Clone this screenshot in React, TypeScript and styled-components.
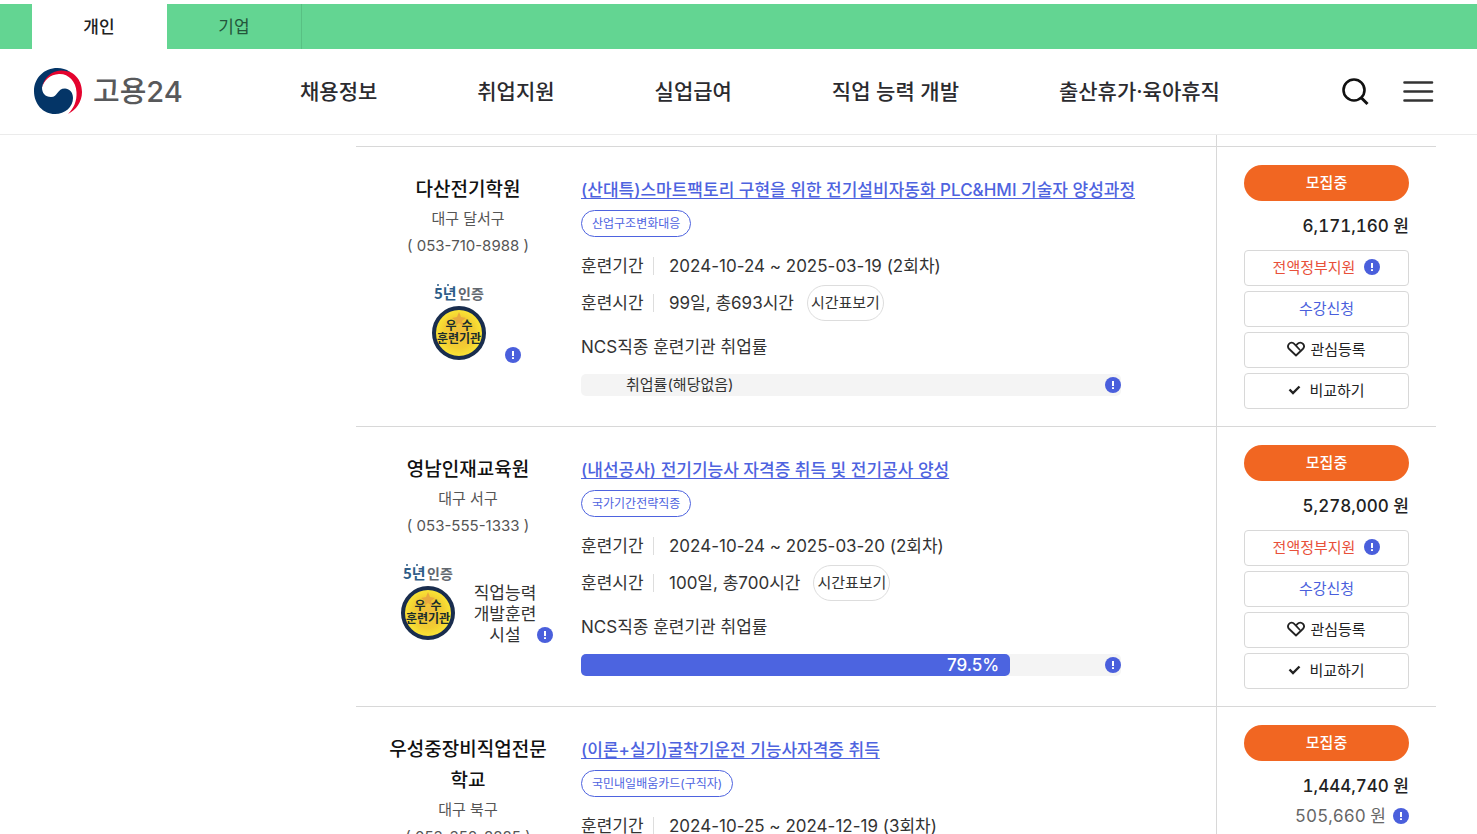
import React from 'react';
import styled, { createGlobalStyle } from 'styled-components';

const Global = createGlobalStyle`
  *, *::before, *::after { box-sizing: border-box; }
  body {
    margin: 0;
    background: #fff;
    color: #333;
    font: 400 17px/26px Inter, 'Noto Sans CJK KR', sans-serif;
  }
  h1, h2, h3, p, dl, dt, dd, ul { margin: 0; padding: 0; }
  button { font-family: inherit; cursor: pointer; }
`;

const Page = styled.div`
  display: flex;
  flex-direction: column;
  height: 100vh;
  overflow: hidden;
`;

const TabBar = styled.nav`
  display: flex;
  flex: none;
  height: 45px;
  margin-top: 4px;
  padding-left: 32px;
  background: #63d592;
`;

const Tab = styled.a<{ $active?: boolean }>`
  width: 135px;
  line-height: 46px;
  text-align: center;
  text-decoration: none;
  color: ${(p) => (p.$active ? '#222' : '#24553b')};
  background: ${(p) => (p.$active ? '#fff' : 'transparent')};
  font-weight: ${(p) => (p.$active ? 500 : 400)};
  border-right: 1px solid ${(p) => (p.$active ? '#fff' : '#58c083')};
`;

const Header = styled.header`
  display: flex;
  flex: none;
  align-items: center;
  height: 86px;
  padding: 0 43px 0 33px;
  border-bottom: 1px solid #ebebeb;
`;

const Logo = styled.a`
  display: flex;
  align-items: center;
  gap: 10px;
  width: 267px;
  color: #58595b;
  font-size: 29px;
  font-weight: 500;
  line-height: 40px;
  text-decoration: none;
`;

const Menu = styled.nav`
  display: flex;
  flex: 1;
  gap: 100px;
`;

const MenuLink = styled.a`
  color: #2b2b2f;
  font-size: 21px;
  font-weight: 500;
  line-height: 30px;
  text-decoration: none;
  white-space: nowrap;
`;

const Tools = styled.div`
  display: flex;
  gap: 30px;
`;

const IconButton = styled.button`
  display: flex;
  padding: 0;
  border: 0;
  background: none;
`;

const Main = styled.main`
  flex: 1;
  min-height: 0;
  overflow: hidden;
  padding: 0 41px 0 356px;
`;

const Course = styled.article`
  display: grid;
  grid-template-columns: 225px minmax(0, 1fr) 220px;
  min-height: 280px;
  border-top: 1px solid #d8d8d8;
`;

const ListTop = styled.div`
  height: 11px;
  margin-right: 219px;
  border-right: 1px solid #d8d8d8;
`;

const Org = styled.div`
  display: flex;
  flex-direction: column;
  align-items: center;
  padding: 27px 32px 0 31px;
  text-align: center;
`;

const OrgName = styled.h2`
  color: #111;
  font-size: 19px;
  font-weight: 500;
  line-height: 31px;
  word-break: break-all;
`;

const OrgText = styled.p`
  color: #555;
  font-size: 15px;
  line-height: 27px;
`;

const Marks = styled.div`
  display: flex;
  align-items: flex-end;
  min-height: 86px;
  margin: 21px 0 0 14px;
`;

const BadgeSlot = styled.div`
  display: flex;
  padding: 0 16px 4px 0;
`;

const MarkSlot = styled.div`
  display: flex;
  padding-bottom: 3px;
`;

const Facility = styled.p`
  width: 63px;
  line-height: 21px;
`;

const Info = styled.div`
  padding: 30px 0 0;
`;

const Title = styled.h3`
  font-size: 17px;
  font-weight: 500;
  line-height: 27px;
`;

const TitleLink = styled.a`
  color: #4e63df;
  text-underline-offset: 2px;
`;

const Tag = styled.span`
  display: block;
  width: fit-content;
  margin: 6px 0 10px;
  padding: 0 10px;
  border: 1px solid #4e63df;
  border-radius: 14px;
  color: #4e63df;
  font-size: 12px;
  line-height: 25px;
`;

const Facts = styled.dl`
  display: grid;
  grid-template-columns: 73px 1fr;
  grid-auto-rows: 37px;
  align-items: center;
`;

const Term = styled.dt`
  line-height: 18px;
  border-right: 1px solid #ddd;
`;

const Value = styled.dd`
  display: flex;
  align-items: center;
  gap: 13px;
  padding-left: 15px;
`;

const TimetableButton = styled.button`
  height: 36px;
  padding: 0 3px 2px;
  border: 1px solid #ddd;
  border-radius: 18px;
  background: #fff;
  color: #333;
  font-size: 15px;
`;

const RateLabel = styled.p`
  margin: 13px 0 14px;
`;

const RateBar = styled.div`
  position: relative;
  display: flex;
  width: 85%;
  height: 22px;
  border-radius: 5px;
  background: #f4f4f4;
  font-size: 15px;
  line-height: 22px;
`;

const RateFill = styled.div`
  padding-right: 11px;
  border-radius: 5px;
  background: #4c64e0;
  color: #fff;
  font-size: 17px;
  font-weight: 500;
  text-align: right;
`;

const RateEmpty = styled.span`
  padding-left: 45px;
`;

const RateInfo = styled.span`
  position: absolute;
  top: 3px;
  right: 0;
  display: flex;
`;

const Side = styled.div`
  display: flex;
  flex-direction: column;
  gap: 5px;
  padding: 18px 27px 12px;
  border-left: 1px solid #d8d8d8;
`;

const Status = styled.strong`
  height: 36px;
  border-radius: 18px;
  background: #f16622;
  color: #fff;
  font-size: 15px;
  font-weight: 500;
  line-height: 35px;
  text-align: center;
`;

const Prices = styled.div`
  padding: 7px 0 6px;
  text-align: right;
  font-variant-numeric: tabular-nums;
`;

const Price = styled.p`
  color: #222;
  font-weight: 500;
  line-height: 26px;
`;

const OwnPrice = styled.p`
  display: flex;
  align-items: center;
  justify-content: flex-end;
  gap: 7px;
  padding-top: 4px;
  color: #666;
`;

const SideButton = styled.button<{ $tone?: string; $gap?: number }>`
  display: flex;
  align-items: center;
  justify-content: center;
  gap: ${(p) => p.$gap ?? 5}px;
  height: 36px;
  padding: 0 0 3px;
  border: 1px solid #d8d8d8;
  border-radius: 4px;
  background: #fff;
  color: ${(p) => p.$tone ?? '#222'};
  font-size: 15px;
`;

const Mark = () => (
  <svg width="16" height="16" viewBox="0 0 16 16" role="img" aria-label="안내">
    <circle cx="8" cy="8" r="8" fill="#4a5fdc" />
    <path d="M8 4v5M8 10.200v1.800" stroke="#fff" strokeWidth="2" />
  </svg>
);

const Taegeuk = () => (
  <svg width="50" height="48" viewBox="0 1 50 48" aria-hidden="true">
    <path d="M9 21C10 9 18 3 28 3C40 3 49 12 49 25C49 35 43 43 35 47C41 41 44 34 43.500 25C43 14 35 6.500 26 7C17 7.500 11 13 9 21Z" fill="#e4032e" />
    <path d="M37 5C33 2 29 1 24.500 1C11 1 1 11 1 24C1 37 10 47 22 47C32 47 40 40 40 31C40 25 36 21.500 32 21.500C24 21.500 25 30 18 30C12 30 9 26 9 20.500C11 11 18 4 28 3.500C31 3.400 34 4 37 5Z" fill="#043567" />
  </svg>
);

const Badge = () => (
  <svg width="60" height="82" viewBox="0 0 60 82" role="img" aria-label="5년 인증 우수훈련기관">
    <defs>
      <radialGradient id="gold">
        <stop offset="0" stopColor="#f0bb3c" />
        <stop offset=".6" stopColor="#f2cd32" />
        <stop offset="1" stopColor="#fbe936" />
      </radialGradient>
    </defs>
    <g fontFamily="'Noto Sans CJK KR', sans-serif" fontWeight="700">
      <text x="5" y="19" fontSize="15" fill="#2d5c88">5년</text>
      <text x="29" y="19" fontSize="14" fill="#62686f">인증</text>
      <circle cx="9" cy="5" r="1" fill="#2d5c88" />
      <circle cx="19" cy="5" r="1" fill="#2d5c88" />
      <circle cx="30" cy="53" r="25" fill="url(#gold)" stroke="#192d4e" strokeWidth="4" />
      <path d="M30 32l2 5 5 1-4 3 1 5-4-3-4 3 1-5-4-3 5-1z" fill="#e9a93f" />
      <g fill="#1c2c2c" textAnchor="middle">
        <text x="22" y="50" fontSize="12">우</text>
        <text x="38" y="50" fontSize="12">수</text>
        <text x="30" y="63" fontSize="12">훈련기관</text>
      </g>
    </g>
  </svg>
);

const Heart = () => (
  <svg width="18" height="16" viewBox="0 0 18 16" fill="none" stroke="#222" strokeWidth="1.800" strokeLinecap="round" strokeLinejoin="round" aria-hidden="true">
    <path d="M12.500 8.500L7.500 3.200C5.800 1.200 3.300 1.300 1.900 3C.7 4.600.9 6.700 2.200 8L9 14.500L15.800 8C17.200 6.600 17.300 4.400 16 2.900C14.500 1.200 12 1.200 10.500 2.900L9.500 4" />
  </svg>
);

const Check = () => (
  <svg width="13" height="10" viewBox="0 0 13 10" fill="none" aria-hidden="true">
    <path d="M1.500 4.500L5 8L11.500 1.500" stroke="#222" strokeWidth="2.400" />
  </svg>
);

interface CourseData {
  org: string;
  area: string;
  phone: string;
  facility?: boolean;
  title: string;
  tag: string;
  period: string;
  hours: string;
  rate?: number;
  price: string;
  ownPrice?: string;
}

const courses: CourseData[] = [
  {
    org: '다산전기학원',
    area: '대구 달서구',
    phone: '053-710-8988',
    title: '(산대특)스마트팩토리 구현을 위한 전기설비자동화 PLC&HMI 기술자 양성과정',
    tag: '산업구조변화대응',
    period: '2024-10-24 ~ 2025-03-19 (2회차)',
    hours: '99일, 총693시간',
    price: '6,171,160 원',
  },
  {
    org: '영남인재교육원',
    area: '대구 서구',
    phone: '053-555-1333',
    facility: true,
    title: '(내선공사) 전기기능사 자격증 취득 및 전기공사 양성',
    tag: '국가기간전략직종',
    period: '2024-10-24 ~ 2025-03-20 (2회차)',
    hours: '100일, 총700시간',
    rate: 79.5,
    price: '5,278,000 원',
  },
  {
    org: '우성중장비직업전문학교',
    area: '대구 북구',
    phone: '053-352-8885',
    title: '(이론+실기)굴착기운전 기능사자격증 취득',
    tag: '국민내일배움카드(구직자)',
    period: '2024-10-25 ~ 2024-12-19 (3회차)',
    hours: '40일, 총160시간',
    price: '1,444,740 원',
    ownPrice: '505,660 원',
  },
];

const menu = ['채용정보', '취업지원', '실업급여', '직업 능력 개발', '출산휴가·육아휴직'];

const CourseRow = ({ c }: { c: CourseData }) => (
  <Course>
    <Org>
      <OrgName>{c.org}</OrgName>
      <OrgText>{c.area}</OrgText>
      <OrgText>( {c.phone} )</OrgText>
      <Marks>
        <BadgeSlot>
          <Badge />
        </BadgeSlot>
        {c.facility && <Facility>직업능력개발훈련시설</Facility>}
        <MarkSlot>
          <Mark />
        </MarkSlot>
      </Marks>
    </Org>
    <Info>
      <Title>
        <TitleLink href="#">{c.title}</TitleLink>
      </Title>
      <Tag>{c.tag}</Tag>
      <Facts>
        <Term>훈련기간</Term>
        <Value>{c.period}</Value>
        <Term>훈련시간</Term>
        <Value>
          {c.hours}
          <TimetableButton>시간표보기</TimetableButton>
        </Value>
      </Facts>
      <RateLabel>NCS직종 훈련기관 취업률</RateLabel>
      <RateBar>
        {c.rate ? <RateFill style={{ width: `${c.rate}%` }}>{c.rate}%</RateFill> : <RateEmpty>취업률(해당없음)</RateEmpty>}
        <RateInfo>
          <Mark />
        </RateInfo>
      </RateBar>
    </Info>
    <Side>
      <Status>모집중</Status>
      <Prices>
        <Price>{c.price}</Price>
        {c.ownPrice && (
          <OwnPrice>
            {c.ownPrice}
            <Mark />
          </OwnPrice>
        )}
      </Prices>
      {!c.ownPrice && (
        <SideButton $tone="#e8503a" $gap={9}>
          전액정부지원
          <Mark />
        </SideButton>
      )}
      <SideButton $tone="#4a5fdc">수강신청</SideButton>
      <SideButton>
        <Heart />
        관심등록
      </SideButton>
      <SideButton $gap={8}>
        <Check />
        비교하기
      </SideButton>
    </Side>
  </Course>
);

export default function App() {
  return (
    <Page>
      <Global />
      <TabBar>
        <Tab href="#" $active>
          개인
        </Tab>
        <Tab href="#">기업</Tab>
      </TabBar>
      <Header>
        <Logo href="#">
          <Taegeuk />
          고용24
        </Logo>
        <Menu>
          {menu.map((m) => (
            <MenuLink key={m} href="#">
              {m}
            </MenuLink>
          ))}
        </Menu>
        <Tools>
          <IconButton aria-label="검색">
            <svg width="32" height="32" viewBox="0 0 32 32" fill="none" stroke="#111" strokeWidth="2.600">
              <circle cx="14" cy="14" r="10.500" />
              <path d="M21 21.500L27.500 28" strokeWidth="3" />
            </svg>
          </IconButton>
          <IconButton aria-label="전체메뉴">
            <svg width="32" height="32" viewBox="0 0 32 32" stroke="#333" strokeWidth="2.600" strokeLinecap="round">
              <path d="M2.500 6.500H30M2.500 15.500H30M2.500 24.500H30" />
            </svg>
          </IconButton>
        </Tools>
      </Header>
      <Main>
        <ListTop />
        {courses.map((c) => (
          <CourseRow key={c.org} c={c} />
        ))}
      </Main>
    </Page>
  );
}
